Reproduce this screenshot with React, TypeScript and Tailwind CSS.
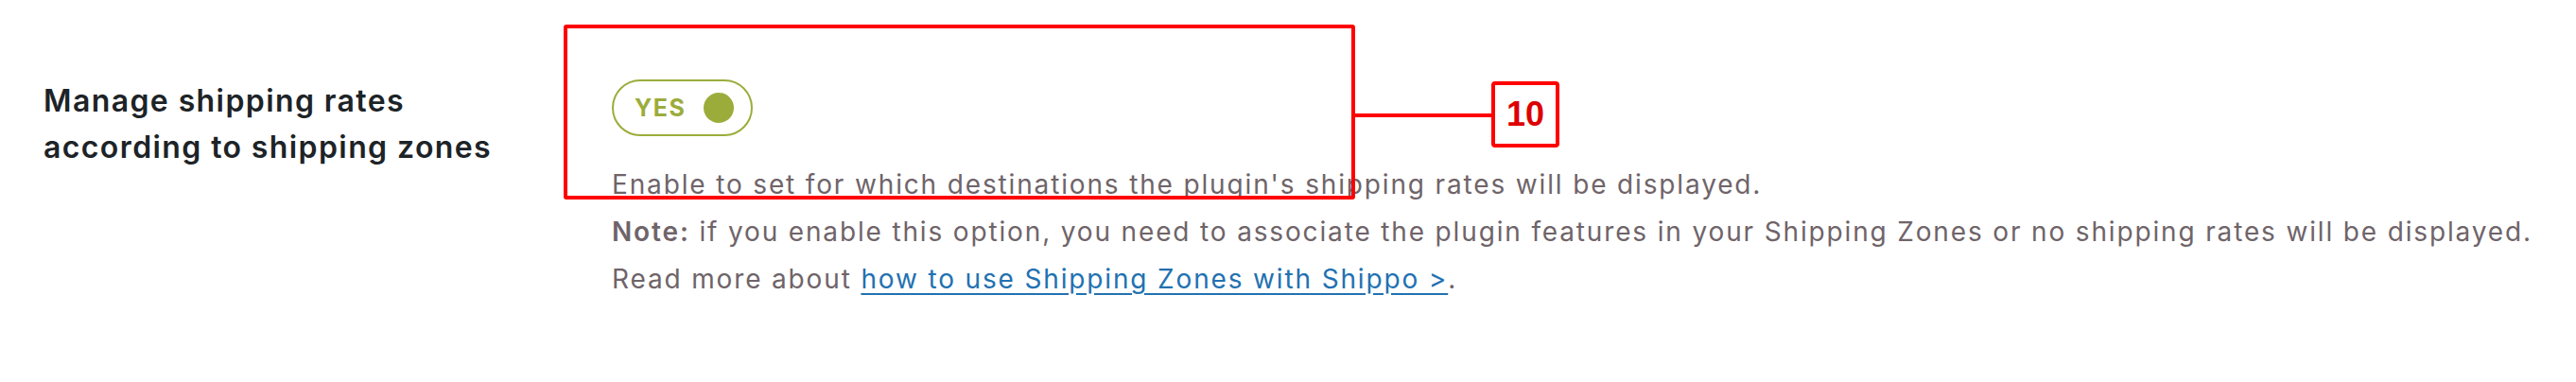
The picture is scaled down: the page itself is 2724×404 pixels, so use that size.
import React from 'react';

export default function App() {
  return (
    <div className="relative w-[2724px] h-[404px] bg-white font-['Inter',sans-serif]">
      <div className="flex pt-[84px] pl-[46px]">
        {/* Field label */}
        <div className="w-[601px] shrink-0 -mt-[2px] text-[32px] font-semibold leading-[49px] tracking-[1.4px] text-[#1d2327]">
          Manage shipping rates
          <br />
          according to shipping zones
        </div>

        {/* Field control + description */}
        <div className="flex flex-col items-start">
          <button className="flex h-[60px] w-[149px] items-center rounded-full border-2 border-[#9cac3b] pl-[22px] pr-[18px]">
            <span className="text-[25px] font-bold leading-none tracking-[1.5px] text-[#9cac3b]">YES</span>
            <span className="ml-auto h-[32px] w-[32px] rounded-full bg-[#9cac3b]"></span>
          </button>

          <div className="mt-[26px] text-[28px] leading-[50px] tracking-[1.85px] text-[#6f6469]">
            <p>Enable to set for which destinations the plugin's shipping rates will be displayed.</p>
            <p>
              <strong className="font-semibold">Note:</strong> if you enable this option, you need to associate the plugin features in your Shipping Zones or no shipping rates will be displayed.
            </p>
            <p>
              Read more about{' '}
              <a href="#" className="text-[#2271b1] underline underline-offset-[5px]">
                how to use Shipping Zones with Shippo &gt;
              </a>
              .
            </p>
          </div>
        </div>
      </div>

      {/* Annotation overlay */}
      <div className="absolute left-[596px] top-[26px] h-[185px] w-[837px] rounded-[3px] border-4 border-[#ff0000]"></div>
      <div className="absolute left-[1433px] top-[120px] h-[4px] w-[146px] bg-[#ff0000]"></div>
      <div className="absolute left-[1577px] top-[86px] flex h-[70px] w-[72px] items-center justify-center rounded-[4px] border-4 border-[#ff0000] bg-white">
        <span className="font-['Liberation_Sans',sans-serif] text-[36px] font-bold leading-none text-[#dd0000]">10</span>
      </div>
    </div>
  );
}
